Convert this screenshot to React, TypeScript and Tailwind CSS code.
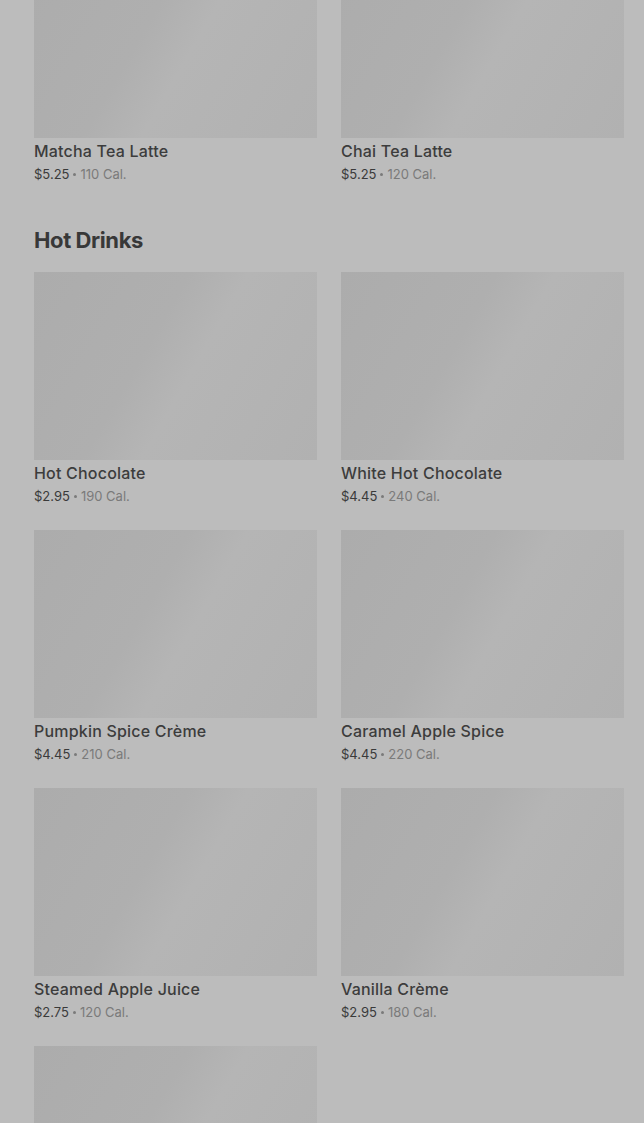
import * as React from "react";

type Item = { name: string; price: string; cal: string };

const prevItems: Item[] = [
    { name: "Matcha Tea Latte", price: "$5.25", cal: "110 Cal." },
    { name: "Chai Tea Latte", price: "$5.25", cal: "120 Cal." },
];

const hotDrinks: Item[] = [
    { name: "Hot Chocolate", price: "$2.95", cal: "190 Cal." },
    { name: "White Hot Chocolate", price: "$4.45", cal: "240 Cal." },
    { name: "Pumpkin Spice Crème", price: "$4.45", cal: "210 Cal." },
    { name: "Caramel Apple Spice", price: "$4.45", cal: "220 Cal." },
    { name: "Steamed Apple Juice", price: "$2.75", cal: "120 Cal." },
    { name: "Vanilla Crème", price: "$2.95", cal: "180 Cal." },
];

const Thumb = () => (
    <div className="h-[188px] w-full bg-[linear-gradient(120deg,#acacac_0%,#afafaf_40%,#b5b5b5_55%,#b1b1b1_100%)]" />
);

const ItemCard = ({ data }: { data: Item }) => (
    <div className="flex flex-col">
        <Thumb />
        <div className="mt-[3px] h-5 text-[16px] leading-5 font-medium tracking-[0.2px] text-[#3c3c3c]">
            {data.name}
        </div>
        <div className="mt-[3px] flex h-5 items-center text-[13px] leading-5 text-[#7a7a7a]">
            <span className="text-[#3a3a3a]">{data.price}</span>
            <span className="mx-[4px] h-[3px] w-[3px] rounded-full bg-[#7a7a7a]" />
            <span>{data.cal}</span>
        </div>
    </div>
);

export default function App() {
    return (
        <div className="h-[1123px] w-full overflow-hidden bg-[#bcbcbc] font-['Inter',sans-serif]">
            <div className="-mt-[50px] pl-[34px] pr-[20px]">
                <div className="grid grid-cols-2 gap-x-6 gap-y-6">
                    {prevItems.map((it) => (
                        <ItemCard key={it.name} data={it} />
                    ))}
                </div>

                <h2 className="mt-10 mb-4 text-[22px] leading-8 font-bold tracking-[-0.4px] text-[#383838]">
                    Hot Drinks
                </h2>

                <div className="grid grid-cols-2 gap-x-6 gap-y-6">
                    {hotDrinks.map((it) => (
                        <ItemCard key={it.name} data={it} />
                    ))}
                    {/* next item, only its picture is in view */}
                    <div className="flex flex-col">
                        <Thumb />
                    </div>
                </div>
            </div>
        </div>
    );
}
